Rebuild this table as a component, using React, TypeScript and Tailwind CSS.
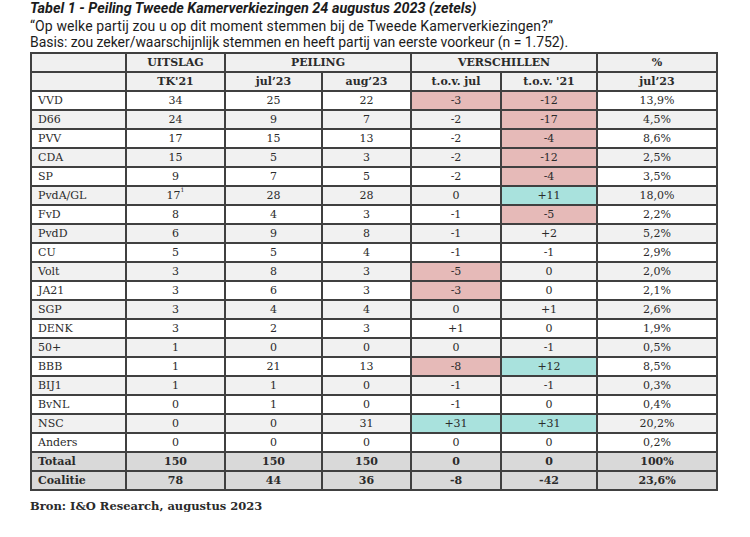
type Row = {
  name: string
  tk: string
  sup?: string
  jul: string
  aug: string
  dJul: string
  d21: string
  pct: string
  hJul?: "red" | "teal"
  h21?: "red" | "teal"
}

const rows: Row[] = [
  { name: "VVD", tk: "34", jul: "25", aug: "22", dJul: "-3", d21: "-12", pct: "13,9%", hJul: "red", h21: "red" },
  { name: "D66", tk: "24", jul: "9", aug: "7", dJul: "-2", d21: "-17", pct: "4,5%", h21: "red" },
  { name: "PVV", tk: "17", jul: "15", aug: "13", dJul: "-2", d21: "-4", pct: "8,6%", h21: "red" },
  { name: "CDA", tk: "15", jul: "5", aug: "3", dJul: "-2", d21: "-12", pct: "2,5%", h21: "red" },
  { name: "SP", tk: "9", jul: "7", aug: "5", dJul: "-2", d21: "-4", pct: "3,5%", h21: "red" },
  { name: "PvdA/GL", tk: "17", sup: "1", jul: "28", aug: "28", dJul: "0", d21: "+11", pct: "18,0%", h21: "teal" },
  { name: "FvD", tk: "8", jul: "4", aug: "3", dJul: "-1", d21: "-5", pct: "2,2%", h21: "red" },
  { name: "PvdD", tk: "6", jul: "9", aug: "8", dJul: "-1", d21: "+2", pct: "5,2%" },
  { name: "CU", tk: "5", jul: "5", aug: "4", dJul: "-1", d21: "-1", pct: "2,9%" },
  { name: "Volt", tk: "3", jul: "8", aug: "3", dJul: "-5", d21: "0", pct: "2,0%", hJul: "red" },
  { name: "JA21", tk: "3", jul: "6", aug: "3", dJul: "-3", d21: "0", pct: "2,1%", hJul: "red" },
  { name: "SGP", tk: "3", jul: "4", aug: "4", dJul: "0", d21: "+1", pct: "2,6%" },
  { name: "DENK", tk: "3", jul: "2", aug: "3", dJul: "+1", d21: "0", pct: "1,9%" },
  { name: "50+", tk: "1", jul: "0", aug: "0", dJul: "0", d21: "-1", pct: "0,5%" },
  { name: "BBB", tk: "1", jul: "21", aug: "13", dJul: "-8", d21: "+12", pct: "8,5%", hJul: "red", h21: "teal" },
  { name: "BIJ1", tk: "1", jul: "1", aug: "0", dJul: "-1", d21: "-1", pct: "0,3%" },
  { name: "BvNL", tk: "0", jul: "1", aug: "0", dJul: "-1", d21: "0", pct: "0,4%" },
  { name: "NSC", tk: "0", jul: "0", aug: "31", dJul: "+31", d21: "+31", pct: "20,2%", hJul: "teal", h21: "teal" },
  { name: "Anders", tk: "0", jul: "0", aug: "0", dJul: "0", d21: "0", pct: "0,2%" },
]

const totals = [
  { name: "Totaal", tk: "150", jul: "150", aug: "150", dJul: "0", d21: "0", pct: "100%" },
  { name: "Coalitie", tk: "78", jul: "44", aug: "36", dJul: "-8", d21: "-42", pct: "23,6%" },
]

function hl(h: "red" | "teal" | undefined, base: string) {
  if (h === "red") return "bg-[#e6bab8]"
  if (h === "teal") return "bg-[#a9e2dd]"
  return base
}

const cell = "flex items-center justify-center h-[17px] leading-none"

export default function App() {
  return (
    <div className="w-[750px] h-[537px] bg-white text-[#2b2b2b] pt-[1px]">
      <div className="pl-[30px] font-['Roboto',sans-serif] text-[14px] leading-[16.5px] text-[#1c1c1c]">
        <div className="font-bold italic text-[14.4px]">Tabel 1 - Peiling Tweede Kamerverkiezingen 24 augustus 2023 (zetels)</div>
        <div className="tracking-[0.12px]">“Op welke partij zou u op dit moment stemmen bij de Tweede Kamerverkiezingen?”</div>
        <div className="tracking-[-0.05px]">Basis: zou zeker/waarschijnlijk stemmen en heeft partij van eerste voorkeur (n = 1.752).</div>
      </div>

      <div className="ml-[30px] mt-[1px] w-[688px] grid grid-cols-[93px_97px_95px_87px_88px_94px_118px] gap-[2px] p-[2px] bg-[#404040] font-['DejaVu_Serif',serif] text-[11px]">
        {/* header row 1 */}
        <div className={`${cell} bg-[#f0f0f0]`} />
        <div className={`${cell} bg-[#f0f0f0] font-bold`}>UITSLAG</div>
        <div className={`${cell} bg-[#f0f0f0] font-bold col-span-2`}>PEILING</div>
        <div className={`${cell} bg-[#f0f0f0] font-bold col-span-2`}>VERSCHILLEN</div>
        <div className={`${cell} bg-[#f0f0f0] font-bold`}>%</div>
        {/* header row 2 */}
        <div className={`${cell} bg-[#f0f0f0]`} />
        <div className={`${cell} bg-[#f0f0f0] font-bold`}>TK'21</div>
        <div className={`${cell} bg-[#f0f0f0] font-bold`}>jul’23</div>
        <div className={`${cell} bg-[#f0f0f0] font-bold`}>aug’23</div>
        <div className={`${cell} bg-[#f0f0f0] font-bold`}>t.o.v. jul</div>
        <div className={`${cell} bg-[#f0f0f0] font-bold`}>t.o.v. '21</div>
        <div className={`${cell} bg-[#f0f0f0] font-bold`}>jul’23</div>

        {rows.map((r, i) => {
          const base = i % 2 === 0 ? "bg-white" : "bg-[#f1f1f1]"
          return [
            <div key={r.name + "n"} className={`${cell} ${base} !justify-start pl-[6px]`}>{r.name}</div>,
            <div key={r.name + "t"} className={`${cell} ${base}`}>
              {r.tk}
              {r.sup && <sup className="text-[6px] -mt-[4px]">{r.sup}</sup>}
            </div>,
            <div key={r.name + "j"} className={`${cell} ${base}`}>{r.jul}</div>,
            <div key={r.name + "a"} className={`${cell} ${base}`}>{r.aug}</div>,
            <div key={r.name + "dj"} className={`${cell} ${hl(r.hJul, base)}`}>{r.dJul}</div>,
            <div key={r.name + "d2"} className={`${cell} ${hl(r.h21, base)}`}>{r.d21}</div>,
            <div key={r.name + "p"} className={`${cell} ${base}`}>{r.pct}</div>,
          ]
        })}

        {totals.map((r) => [
          <div key={r.name + "n"} className={`${cell} bg-[#d9d9d9] font-bold !justify-start pl-[6px]`}>{r.name}</div>,
          <div key={r.name + "t"} className={`${cell} bg-[#d9d9d9] font-bold`}>{r.tk}</div>,
          <div key={r.name + "j"} className={`${cell} bg-[#d9d9d9] font-bold`}>{r.jul}</div>,
          <div key={r.name + "a"} className={`${cell} bg-[#d9d9d9] font-bold`}>{r.aug}</div>,
          <div key={r.name + "dj"} className={`${cell} bg-[#d9d9d9] font-bold`}>{r.dJul}</div>,
          <div key={r.name + "d2"} className={`${cell} bg-[#d9d9d9] font-bold`}>{r.d21}</div>,
          <div key={r.name + "p"} className={`${cell} bg-[#d9d9d9] font-bold`}>{r.pct}</div>,
        ])}
      </div>

      <div className="ml-[30px] mt-[7px] font-['DejaVu_Serif',serif] font-bold text-[11.5px] text-[#2b2b2b]">
        Bron: I&amp;O Research, augustus 2023
      </div>
    </div>
  )
}
